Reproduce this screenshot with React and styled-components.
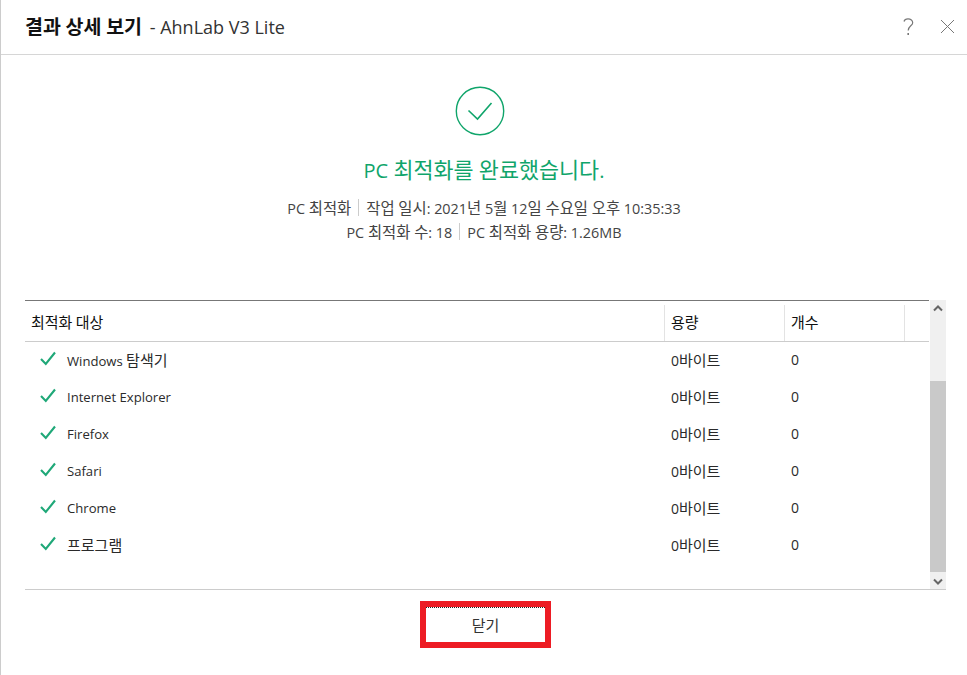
import React from 'react'
import styled, { createGlobalStyle } from 'styled-components'

const GlobalStyle = createGlobalStyle`
  html, body {
    margin: 0;
    padding: 0;
    background: #fff;
  }
  body {
    font-family: "Open Sans", "Noto Sans CJK KR", sans-serif;
    color: #333;
  }
`

const items = ['Windows 탐색기', 'Internet Explorer', 'Firefox', 'Safari', 'Chrome', '프로그램']

const Window = styled.div`
  width: 967px;
  height: 675px;
  box-sizing: border-box;
  border-left: 1px solid #ccc;
  display: flex;
  flex-direction: column;
  overflow: hidden;
`

const TitleBar = styled.header`
  height: 54px;
  flex: none;
  border-bottom: 1px solid #d6d6d6;
  display: flex;
  align-items: center;
  padding: 0 12px 0 24px;
`

const Title = styled.h1`
  margin: 0;
  font-size: 18px;
  line-height: 54px;
  font-weight: 400;
  color: #333;
  flex: 1;
  --ko: 19.5px;
  strong {
    font-weight: 700;
    color: #111;
    margin-right: 3px;
  }
`

const TitleActions = styled.div`
  display: flex;
  align-items: center;
  gap: 26px;
  margin-top: -1px;
`

const IconButton = styled.button`
  border: 0;
  padding: 0;
  background: none;
  display: flex;
`

const Summary = styled.section`
  height: 245px;
  flex: none;
  display: flex;
  flex-direction: column;
  align-items: center;
  padding-top: 31px;
  box-sizing: border-box;
  svg {
    margin-right: 8px;
  }
`

const Heading = styled.h2`
  margin: 20px 0 0;
  font-size: 20px;
  line-height: 28px;
  font-weight: 400;
  color: #10a56b;
  --ko: 21.8px;
`

const InfoLine = styled.div`
  display: flex;
  align-items: center;
  height: 24px;
  font-size: 14.4px;
  color: #444;
  --ko: 15.4px;
  &:first-of-type {
    margin-top: 10px;
  }
`

const Divider = styled.span`
  width: 1px;
  height: 17px;
  background: #ccc;
  margin: 0 7px;
`

const TableArea = styled.div`
  display: flex;
  height: 289px;
  flex: none;
  margin: 0 21px 0 24px;
  border-bottom: 1px solid #ccc;
`

const Table = styled.div`
  flex: 1;
  border-top: 1px solid #777;
  --ko: 15px;
`

const Row = styled.div`
  display: grid;
  grid-template-columns: 639px 120px 120px 1fr;
  align-items: center;
  height: 37px;
  font-size: 13.1px;
  color: #2a2a2a;
`

const HeadRow = styled(Row)`
  height: 40px;
  border-bottom: 1px solid #ccc;
`

const HeadCell = styled.div`
  height: 36px;
  margin-top: 4px;
  display: flex;
  align-items: center;
  padding: 0 0 4px 6px;
  box-sizing: border-box;
  border-left: ${p => (p.$first ? '0' : '1px solid #e3e3e3')};
  color: #111;
`

const NameCell = styled.div`
  display: flex;
  align-items: center;
  gap: 11px;
  padding: 0 0 2px 15px;
`

const Cell = styled.div`
  padding: 0 0 2px 7px;
  font-size: 14px;
`

const CheckMark = styled.svg`
  margin-top: -2px;
`

const Scrollbar = styled.div`
  width: 16px;
  margin-left: 1px;
  background: #f0f0f0;
  display: flex;
  flex-direction: column;
  align-items: center;
`

const ScrollArrow = styled.div`
  height: 16px;
  flex: none;
  display: flex;
  align-items: center;
  justify-content: center;
`

const ScrollTrack = styled.div`
  flex: 1;
  align-self: stretch;
  display: flex;
  flex-direction: column;
  padding-top: 65px;
`

const ScrollThumb = styled.div`
  height: 191px;
  background: #c9c9c9;
`

const Footer = styled.footer`
  display: flex;
  justify-content: center;
  padding: 11px 0 0 3px;
`

const CloseButton = styled.button`
  width: 131px;
  height: 47px;
  box-sizing: border-box;
  border: 6px solid #ed1c24;
  background: #fff;
  font: inherit;
  font-size: 14px;
  color: #333;
  padding: 0;
  position: relative;
  --ko: 15px;
  &::before {
    content: '';
    position: absolute;
    left: 0;
    right: 0;
    top: 0;
    border-top: 1px dotted #222;
  }
`

const Ko = styled.span`
  font-size: var(--ko);
`

// hangul is set a little larger than latin, as in the original font
function T({ children }) {
  const parts = children.split(/([가-힣]+)/).map((part, i) =>
    i % 2 ? <Ko key={i}>{part}</Ko> : part
  )
  return <span>{parts}</span>
}

function Check() {
  return (
    <CheckMark width="16" height="15" viewBox="0 0 16 15" fill="none">
      <path d="M1 8L5.8 13L15 1.5" stroke="#1fa878" strokeWidth="2.1" />
    </CheckMark>
  )
}

function App() {
  return (
    <Window>
      <GlobalStyle />
      <TitleBar>
        <Title><strong><T>결과 상세 보기</T></strong> - AhnLab V3 Lite</Title>
        <TitleActions>
          <IconButton>
            <svg width="11" height="18" viewBox="0 0 11 18" fill="none" stroke="#777" strokeWidth="1.2">
              <path d="M1 3.5C1.5 1.5 3.3 .8 5 .8C7.8 .8 9.7 2.5 9.7 4.7C9.7 7.8 5.2 8 5.2 12.5" />
              <path d="M5.2 15V17" strokeWidth="1.6" />
            </svg>
          </IconButton>
          <IconButton>
            <svg width="15" height="15" viewBox="0 0 15 15" fill="none" stroke="#777" strokeWidth="1">
              <path d="M1 1L14 14M14 1L1 14" />
            </svg>
          </IconButton>
        </TitleActions>
      </TitleBar>
      <Summary>
        <svg width="50" height="50" viewBox="0 0 50 50" fill="none" stroke="#10a56b">
          <circle cx="25" cy="25" r="23.7" strokeWidth="1.4" />
          <path d="M13.5 24.5L22.5 33L36.5 17" strokeWidth="1.6" />
        </svg>
        <Heading><T>PC 최적화를 완료했습니다.</T></Heading>
        <InfoLine><T>PC 최적화</T><Divider /><T>작업 일시: 2021년 5월 12일 수요일 오후 10:35:33</T></InfoLine>
        <InfoLine><T>PC 최적화 수: 18</T><Divider /><T>PC 최적화 용량: 1.26MB</T></InfoLine>
      </Summary>
      <TableArea>
        <Table>
          <HeadRow>
            <HeadCell $first><T>최적화 대상</T></HeadCell>
            <HeadCell><T>용량</T></HeadCell>
            <HeadCell><T>개수</T></HeadCell>
            <HeadCell />
          </HeadRow>
          {items.map(name => (
            <Row key={name}>
              <NameCell><Check /><T>{name}</T></NameCell>
              <Cell><T>0바이트</T></Cell>
              <Cell>0</Cell>
            </Row>
          ))}
        </Table>
        <Scrollbar>
          <ScrollArrow>
            <svg width="10" height="7" viewBox="0 0 10 7" fill="none" stroke="#666" strokeWidth="2">
              <path d="M1 5.5L5 1.5L9 5.5" />
            </svg>
          </ScrollArrow>
          <ScrollTrack><ScrollThumb /></ScrollTrack>
          <ScrollArrow>
            <svg width="10" height="7" viewBox="0 0 10 7" fill="none" stroke="#666" strokeWidth="2">
              <path d="M1 1.5L5 5.5L9 1.5" />
            </svg>
          </ScrollArrow>
        </Scrollbar>
      </TableArea>
      <Footer>
        <CloseButton><T>닫기</T></CloseButton>
      </Footer>
    </Window>
  )
}

export default App
